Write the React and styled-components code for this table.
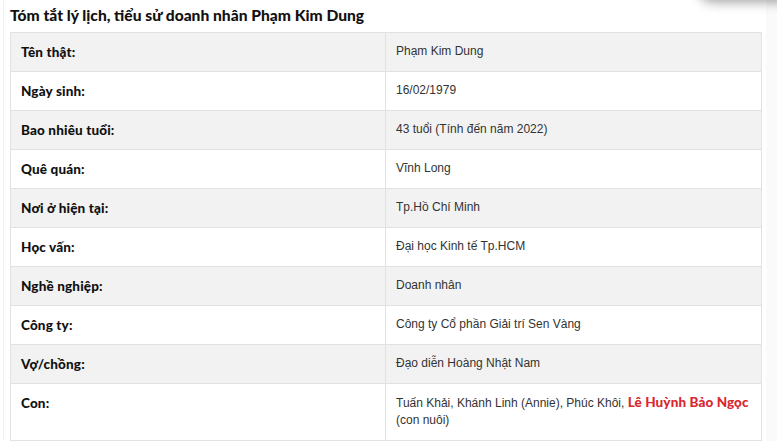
import React from "react";
import styled, { createGlobalStyle } from "styled-components";

const Global = createGlobalStyle`
  html, body { margin: 0; padding: 0; background: #fff; }
  body { font-family: "Liberation Sans", Arial, sans-serif; }
`;

const Page = styled.div`
  position: relative;
  display: flex;
  width: 777px;
  height: 441px;
  overflow: hidden;
  padding-left: 3px;
  box-sizing: border-box;
`;

const Content = styled.div`
  flex: 1;
  border-left: 1px solid #f1f1f1;
  padding: 0 4px 0 6px;
`;

const Gutter = styled.div`
  width: 11px;
  background: #fafafa;
`;

const FloatingBar = styled.div`
  position: absolute;
  top: -44px;
  right: -12px;
  width: 90px;
  height: 44px;
  background: #fff;
  border-radius: 0 0 0 14px;
  box-shadow: 0 2px 12px rgba(0, 0, 0, 0.38);
`;

const Title = styled.h3`
  margin: 6px 0 8px;
  font-family: Lato, "Open Sans", sans-serif;
  font-weight: 900;
  font-size: 15.6px;
  line-height: 18px;
  color: #111;
`;

const Table = styled.table`
  width: 752px;
  border-collapse: collapse;
  table-layout: fixed;
`;

const Row = styled.tr`
  background: ${(p) => (p.$shaded ? "#f2f2f2" : "#fff")};
`;

const Label = styled.td`
  width: 354px;
  border: 1px solid #e2e2e2;
  padding: 11px 10px 10px;
  vertical-align: top;
  font-family: Lato, "Open Sans", sans-serif;
  font-weight: 900;
  font-size: 13.5px;
  letter-spacing: 0.15px;
  line-height: 17px;
  color: #111;
`;

const Value = styled.td`
  border: 1px solid #e2e2e2;
  padding: 10px 10px 11px;
  vertical-align: top;
  font-size: 12px;
  line-height: 17px;
  color: #333;
`;

const Highlight = styled.strong`
  font-family: Lato, "Open Sans", sans-serif;
  font-weight: 900;
  font-size: 13.5px;
  letter-spacing: 0.1px;
  color: #d9272e;
`;

const rows = [
  ["Tên thật:", "Phạm Kim Dung"],
  ["Ngày sinh:", "16/02/1979"],
  ["Bao nhiêu tuổi:", "43 tuổi (Tính đến năm 2022)"],
  ["Quê quán:", "Vĩnh Long"],
  ["Nơi ở hiện tại:", "Tp.Hồ Chí Minh"],
  ["Học vấn:", "Đại học Kinh tế Tp.HCM"],
  ["Nghề nghiệp:", "Doanh nhân"],
  ["Công ty:", "Công ty Cổ phần Giải trí Sen Vàng"],
  ["Vợ/chồng:", "Đạo diễn Hoàng Nhật Nam"],
  [
    "Con:",
    <>
      Tuấn Khải, Khánh Linh (Annie), Phúc Khôi, <Highlight>Lê Huỳnh Bảo Ngọc</Highlight>
      <br />
      (con nuôi)
    </>,
  ],
];

export default function App() {
  return (
    <>
      <Global />
      <Page>
        <Content>
          <Title>Tóm tắt lý lịch, tiểu sử doanh nhân Phạm Kim Dung</Title>
          <Table>
            <tbody>
              {rows.map(([l, v], i) => (
                <Row key={i} $shaded={i % 2 === 0}>
                  <Label>{l}</Label>
                  <Value>{v}</Value>
                </Row>
              ))}
            </tbody>
          </Table>
        </Content>
        <Gutter />
        <FloatingBar />
      </Page>
    </>
  );
}
